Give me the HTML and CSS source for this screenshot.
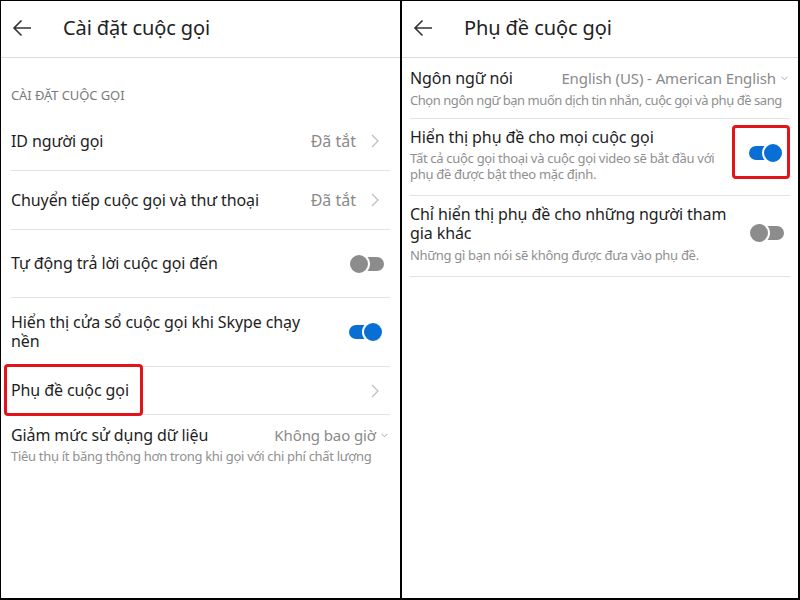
FILE: index.html
```html
<!DOCTYPE html>
<html lang="vi">
<head>
<meta charset="utf-8">
<link rel="stylesheet" href="styles.css">
</head>
<body>
<div class="screen">
  <section class="panel panel-left">
    <header class="header">
      <svg class="back" width="20" height="18" viewBox="0 0 20 18"><path d="M19 9H2M9.5 1.5L2 9l7.5 7.5" fill="none" stroke="#333" stroke-width="1.6"/></svg>
      <h1 class="title">Cài đặt cuộc gọi</h1>
    </header>
    <div class="section-label">CÀI ĐẶT CUỘC GỌI</div>
    <div class="list">
      <div class="row row-h58">
        <span class="label">ID người gọi</span>
        <span class="value">Đã tắt</span>
        <svg class="chev" width="8" height="14" viewBox="0 0 8 14"><path d="M1 1l6 6-6 6" fill="none" stroke="#bdbdbd" stroke-width="1.2"/></svg>
      </div>
      <div class="row row-h58">
        <span class="label">Chuyển tiếp cuộc gọi và thư thoại</span>
        <span class="value">Đã tắt</span>
        <svg class="chev" width="8" height="14" viewBox="0 0 8 14"><path d="M1 1l6 6-6 6" fill="none" stroke="#bdbdbd" stroke-width="1.2"/></svg>
      </div>
      <div class="row row-h67">
        <span class="label">Tự động trả lời cuộc gọi đến</span>
        <span class="toggle off"><span class="track"></span><span class="knob"></span></span>
      </div>
      <div class="row row-h68">
        <span class="label label-wrap">Hiển thị cửa sổ cuộc gọi khi Skype chạy nền</span>
        <span class="toggle on"><span class="track"></span><span class="knob"></span></span>
      </div>
      <div class="row row-h47 highlight-row">
        <span class="label">Phụ đề cuộc gọi</span>
        <svg class="chev chev-only" width="8" height="14" viewBox="0 0 8 14"><path d="M1 1l6 6-6 6" fill="none" stroke="#bdbdbd" stroke-width="1.2"/></svg>
        <span class="mark mark-left"></span>
      </div>
      <div class="row row-sub row-last">
        <div class="text">
          <div class="line-top">
            <span class="label">Giảm mức sử dụng dữ liệu</span>
            <span class="value value-sm">Không bao giờ<svg class="drop" width="7" height="5" viewBox="0 0 7 5"><path d="M0.5 0.8l3 3 3-3" fill="none" stroke="#aaa" stroke-width="1"/></svg></span>
          </div>
          <div class="sub">Tiêu thụ ít băng thông hơn trong khi gọi với chi phí chất lượng</div>
        </div>
      </div>
    </div>
  </section>
  <div class="divider"></div>
  <section class="panel panel-right">
    <header class="header">
      <svg class="back" width="20" height="18" viewBox="0 0 20 18"><path d="M19 9H2M9.5 1.5L2 9l7.5 7.5" fill="none" stroke="#333" stroke-width="1.6"/></svg>
      <h1 class="title">Phụ đề cuộc gọi</h1>
    </header>
    <div class="list list-right">
      <div class="row row-sub r1">
        <div class="text">
          <div class="line-top">
            <span class="label">Ngôn ngữ nói</span>
            <span class="value value-sm">English (US) - American English<svg class="drop" width="7" height="5" viewBox="0 0 7 5"><path d="M0.5 0.8l3 3 3-3" fill="none" stroke="#aaa" stroke-width="1"/></svg></span>
          </div>
          <div class="sub">Chọn ngôn ngữ bạn muốn dịch tin nhắn, cuộc gọi và phụ đề sang</div>
        </div>
      </div>
      <div class="row row-sub r2">
        <div class="text">
          <div class="label">Hiển thị phụ đề cho mọi cuộc gọi</div>
          <div class="sub sub-tight">Tất cả cuộc gọi thoại và cuộc gọi video sẽ bắt đầu với phụ đề được bật theo mặc định.</div>
        </div>
        <span class="toggle-wrap">
          <span class="toggle on"><span class="track"></span><span class="knob"></span></span>
          <span class="mark mark-right"></span>
        </span>
      </div>
      <div class="row row-sub r3">
        <div class="text">
          <div class="label">Chỉ hiển thị phụ đề cho những người tham gia khác</div>
          <div class="sub">Những gì bạn nói sẽ không được đưa vào phụ đề.</div>
        </div>
        <span class="toggle off"><span class="track"></span><span class="knob"></span></span>
      </div>
    </div>
  </section>
</div>
</body>
</html>
```
FILE: styles.css
```css
* { box-sizing: border-box; margin: 0; padding: 0; }
html, body { width: 800px; height: 600px; background: #fff; }
body { font-family: "Noto Sans", "Open Sans", sans-serif; color: #222; }

.screen {
  width: 800px;
  height: 600px;
  border: 1px solid #000;
  border-right-width: 2px;
  border-bottom-width: 2px;
  display: flex;
}
.panel { display: flex; flex-direction: column; }
.panel-left { width: 399px; }
.panel-right { flex: 1; }
.divider { width: 2px; background: #000; }

.header {
  height: 57px;
  border-bottom: 1px solid #dcdcdc;
  display: flex;
  align-items: center;
  padding-left: 11px;
  padding-bottom: 3px;
}
.back { flex: none; margin-right: 31px; margin-top: 1px; }
.title { font-size: 20px; font-weight: 400; color: #222; letter-spacing: -0.1px; }

.section-label {
  font-size: 13px;
  color: #7a7a7a;
  padding: 28px 0 0 10px;
  height: 54px;
  letter-spacing: -0.1px;
}

.list { margin: 0 10px 0 10px; }
.list-right { margin: 0 8px 0 8px; }

.row {
  display: flex;
  align-items: center;
  border-bottom: 1px solid #e2e2e2;
  position: relative;
}
.row-h58 { height: 59px; }
.row-h67 { height: 68px; }
.row-h68 { height: 69px; }
.row-h47 { height: 48px; }
.row-last { padding: 10px 0 12px; border-bottom: none; }

.label { font-size: 16px; line-height: 19px; color: #1e1e1e; flex: 1; letter-spacing: -0.1px; }
.label-wrap { max-width: 300px; }
.value { font-size: 16px; color: #8a8a8a; margin-right: 15px; }
.value-sm { margin-right: 2px; display: inline-flex; align-items: center; font-size: 15px; letter-spacing: -0.1px; }
.drop { margin-left: 5px; }
.chev { flex: none; margin-right: 11px; }

.text { flex: 1; min-width: 0; }
.line-top { display: flex; align-items: center; }
.sub { font-size: 13px; line-height: 16px; color: #8f8f8f; margin-top: 3px; letter-spacing: -0.3px; }
.sub-tight { margin-top: 3px; max-width: 330px; }

.r1 { padding: 10px 0 10px; }
.r1 .sub { margin-top: 4px; letter-spacing: -0.45px; white-space: nowrap; }
.r2 { padding: 9px 0 13px; }
.r2 .toggle-wrap { margin-bottom: 4px; }
.r3 { padding: 9px 0 13px; }
.r3 .label { max-width: 330px; }
.r3 .sub { margin-top: 4px; }
.r3 .toggle { margin-bottom: 2px; }

.toggle {
  flex: none;
  position: relative;
  width: 36px;
  height: 22px;
  margin-right: 6px;
  margin-left: auto;
}
.track {
  position: absolute;
  top: 4px;
  width: 23px;
  height: 14px;
  border-radius: 7px;
}
.knob {
  position: absolute;
  top: 0;
  width: 22px;
  height: 22px;
  border-radius: 50%;
  border: 2px solid #fff;
}
.off .track { right: 0; background: #8c8c8c; }
.off .knob { left: 0; background: #8c8c8c; }
.on .track { left: 1px; background: #0a6fd4; }
.on .knob { right: 0; background: #0a6fd4; }

.toggle-wrap { position: relative; flex: none; display: flex; }

.mark {
  position: absolute;
  border: 3px solid #e3121b;
  border-radius: 4px;
  pointer-events: none;
}
.mark-left { left: -7px; top: -3px; width: 139px; height: 52px; }
.mark-right { left: -16px; top: -17px; width: 58px; height: 54px; }
```
